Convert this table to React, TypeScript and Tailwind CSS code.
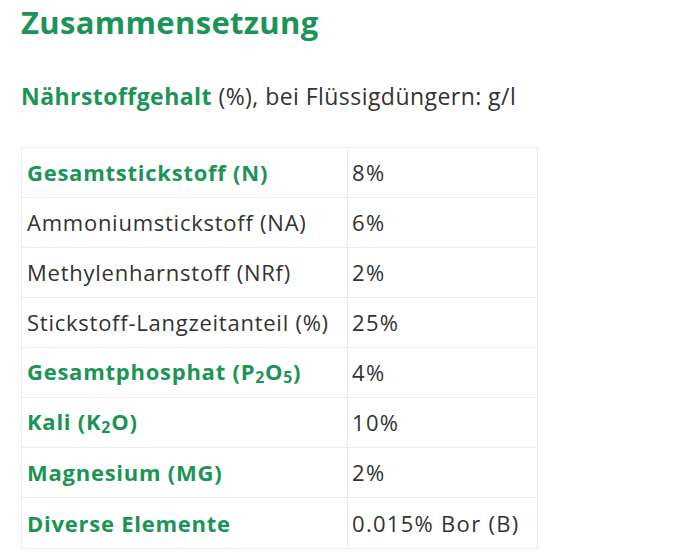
import React from "react";

const green = "text-[#1b9456]";

type Row = { label: React.ReactNode; value: string; bold: boolean };

const Sub = ({ children }: { children: React.ReactNode }) => (
  <span className="text-[0.72em] align-[-0.22em]">{children}</span>
);

const rows: Row[] = [
  { label: "Gesamtstickstoff (N)", value: "8%", bold: true },
  { label: "Ammoniumstickstoff (NA)", value: "6%", bold: false },
  { label: "Methylenharnstoff (NRf)", value: "2%", bold: false },
  { label: "Stickstoff-Langzeitanteil (%)", value: "25%", bold: false },
  {
    label: (
      <>
        Gesamtphosphat (P<Sub>2</Sub>O<Sub>5</Sub>)
      </>
    ),
    value: "4%",
    bold: true,
  },
  {
    label: (
      <>
        Kali (K<Sub>2</Sub>O)
      </>
    ),
    value: "10%",
    bold: true,
  },
  { label: "Magnesium (MG)", value: "2%", bold: true },
  { label: "Diverse Elemente", value: "0.015% Bor (B)", bold: true },
];

export default function App() {
  return (
    <div
      className="w-[693px] h-[554px] bg-white overflow-hidden pl-[21px] flex flex-col"
      style={{ fontFamily: '"Open Sans", "Noto Sans", sans-serif' }}
    >
      <h1 className={`${green} font-bold text-[31px] leading-[44px] tracking-[0.33px]`}>Zusammensetzung</h1>
      <p className="mt-[37px] text-[23px] leading-[30px] text-[#333] tracking-[0.45px]">
        <span className={`${green} font-bold`}>Nährstoffgehalt</span> (%), bei Flüssigdüngern: g/l
      </p>
      <div className="mt-[36px] w-[517px] border border-[#ececec] flex flex-col text-[22px] tracking-[0.75px]">
        {rows.map((r, i) => (
          <div
            key={i}
            className={`h-[50px] flex ${i < rows.length - 1 ? "border-b border-[#ececec]" : ""}`}
          >
            <div
              className={`w-[326px] border-r border-[#ececec] px-[5px] flex items-center ${
                r.bold ? `${green} font-bold` : "text-[#333]"
              }`}
            >
              <span>{r.label}</span>
            </div>
            <div className="flex-1 px-[4px] flex items-center text-[#333] tracking-[1.3px]">{r.value}</div>
          </div>
        ))}
      </div>
    </div>
  );
}
